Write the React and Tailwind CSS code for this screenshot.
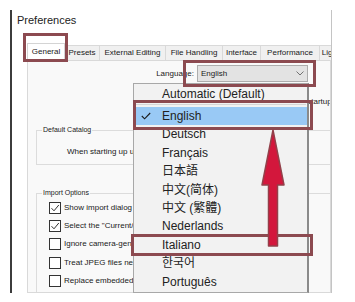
import React from 'react'

const ui = { fontFamily: '"Liberation Sans", Arial, sans-serif' }

function Check({ checked }) {
  return (
    <div className="w-[12px] h-[12px] border border-[#333] bg-white flex items-center justify-center shrink-0">
      {checked && (
        <svg width="10" height="10" viewBox="0 0 10 10">
          <path d="M1.5 5.2 L4 7.8 L8.8 2" fill="none" stroke="#333" strokeWidth="1" />
        </svg>
      )}
    </div>
  )
}

export default function App() {
  const tabs = [
    { label: 'Presets', w: 'w-[35px]' },
    { label: 'External Editing', w: 'w-[66px]' },
    { label: 'File Handling', w: 'w-[57px]' },
    { label: 'Interface', w: 'w-[38px]' },
    { label: 'Performance', w: 'w-[59px]' },
    { label: 'Lightroom Sync', w: 'w-[60px]' },
  ]

  const imports = [
    { label: 'Show import dialog when a memory card is detected', checked: true },
    { label: 'Select the "Current/Previous Import" collection during import', checked: true },
    { label: 'Ignore camera-generated folder names when naming folders', checked: false },
    { label: 'Treat JPEG files next to raw files as separate photos', checked: false },
    { label: 'Replace embedded previews with standard previews during idle time', checked: false },
  ]

  const languages = [
    'Deutsch',
    'Français',
    '日本語',
    '中文(简体)',
    '中文 (繁體)',
    'Nederlands',
    'Italiano',
    '한국어',
    'Português',
  ]

  return (
    <div className="relative w-[355px] h-[302px] bg-white overflow-hidden text-[#1a1a1a]" style={ui}>
      {/* Dialog */}
      <div className="pt-[10px] pl-[10px]">
        <div className="w-[322px] h-[283px] border-l-[2px] border-l-[#3c3c3c] border-r border-r-[#c4c4c4] flex flex-col overflow-hidden">
          <div className="h-[33px] pl-[5px] pt-[3px] text-[11px] leading-[14px] text-[#222]">Preferences</div>

          {/* Tabs */}
          <div className="h-[17px] pl-[15px] flex items-end overflow-hidden whitespace-nowrap text-[8px]">
            <div className="w-[38px] h-[17px] bg-white border border-b-0 border-[#d4d4d4] flex items-center justify-center shrink-0">
              General
            </div>
            {tabs.map((t) => (
              <div
                key={t.label}
                className={`${t.w} h-[15px] bg-[#f0f0f0] border-t border-r border-[#d9d9d9] flex items-center justify-center shrink-0 overflow-hidden`}
              >
                {t.label}
              </div>
            ))}
          </div>

          {/* Tab page */}
          <div className="ml-[15px] flex-1 border border-[#d9d9d9] bg-[#f9f9f9] overflow-hidden text-[8px] whitespace-nowrap">
            <div className="mt-[4px] h-[17px] flex items-center">
              <div className="w-[166px] text-right">Language:</div>
              <div className="ml-[3px] w-[111px] h-[17px] bg-[#e3e3e3] border border-[#adadad] flex items-center justify-between px-[3px]">
                <span>English</span>
                <svg width="8" height="5" viewBox="0 0 8 5">
                  <path d="M0.5 0.5 L4 4 L7.5 0.5" fill="none" stroke="#555" strokeWidth="0.8" />
                </svg>
              </div>
            </div>

            <div className="mt-[14px] h-[11px] pl-[181px] leading-[11px]">Show splash screen during startup</div>

            <div className="mt-[23px] ml-[8px] w-[320px] h-[35px] border border-[#dcdcdc] relative">
              <div className="absolute -top-[6px] left-[5px] px-[1px] bg-[#f9f9f9] text-[7px] leading-[10px]">Default Catalog</div>
              <div className="pt-[13px] pl-[30px] flex items-center">
                <span>When starting up use this catalog:</span>
                <div className="ml-[150px] w-[60px] h-[15px] bg-[#e3e3e3] border border-[#adadad]" />
              </div>
            </div>

            <div className="mt-[28px] ml-[8px] w-[320px] h-[120px] border border-[#dcdcdc] relative">
              <div className="absolute -top-[6px] left-[5px] px-[1px] bg-[#f9f9f9] text-[7px] leading-[10px]">Import Options</div>
              <div className="pt-[8px] pl-[12px] flex flex-col gap-[6.2px]">
                {imports.map((r) => (
                  <div key={r.label} className="flex items-center gap-[3px] h-[12px]">
                    <Check checked={r.checked} />
                    <span>{r.label}</span>
                  </div>
                ))}
              </div>
            </div>
          </div>
        </div>
      </div>

      {/* Open language list */}
      <div className="absolute left-[133px] top-[83px] w-[176px] h-[210px] bg-[#f2f2f2] border border-[#a8a8a8] border-r-[2px] border-r-[#8a8a8a] text-[12px] text-[#222] whitespace-nowrap">
        <div className="h-[18px] pl-[28px] pt-[1px] flex items-center">Automatic (Default)</div>
        <div className="h-[5px] flex items-center px-[1px]">
          <div className="w-full h-px bg-[#d6d6d6]" />
        </div>
        <div className="h-[18px] bg-[#99c9f5] flex items-center relative">
          <svg className="absolute left-[7px] top-[5px]" width="10" height="8" viewBox="0 0 10 8">
            <path d="M0.8 4 L3.6 6.8 L9.2 1" fill="none" stroke="#1a1a1a" strokeWidth="1.1" />
          </svg>
          <span className="pl-[28px]">English</span>
        </div>
        {languages.map((l) => (
          <div key={l} className="h-[18.45px] pl-[28px] flex items-center" style={{ fontFamily: '"Liberation Sans", "Noto Sans CJK SC", "Noto Sans CJK KR", sans-serif' }}>
            {l}
          </div>
        ))}
      </div>

      {/* Annotation boxes */}
      <div className="absolute left-[23px] top-[33px] w-[45px] h-[29px] border-[3px] border-[#8c4a50]" />
      <div className="absolute left-[183px] top-[60px] w-[133px] h-[27px] border-[3px] border-[#8c4a50]" />
      <div className="absolute left-[133px] top-[100px] w-[180px] h-[30px] border-[3px] border-[#8c4a50]" />
      <div className="absolute left-[131px] top-[234px] w-[182px] h-[22px] border-[3px] border-[#8c4a50]" />

      {/* Arrow */}
      <svg className="absolute left-[260px] top-[128px]" width="28" height="122" viewBox="0 0 28 122">
        <path
          d="M13 2 L24 57 L17.5 57 L17.5 118 L8.5 118 L8.5 57 L2 57 Z"
          fill="#d3173c"
          stroke="#93404a"
          strokeWidth="1.5"
          strokeLinejoin="round"
        />
      </svg>
    </div>
  )
}
